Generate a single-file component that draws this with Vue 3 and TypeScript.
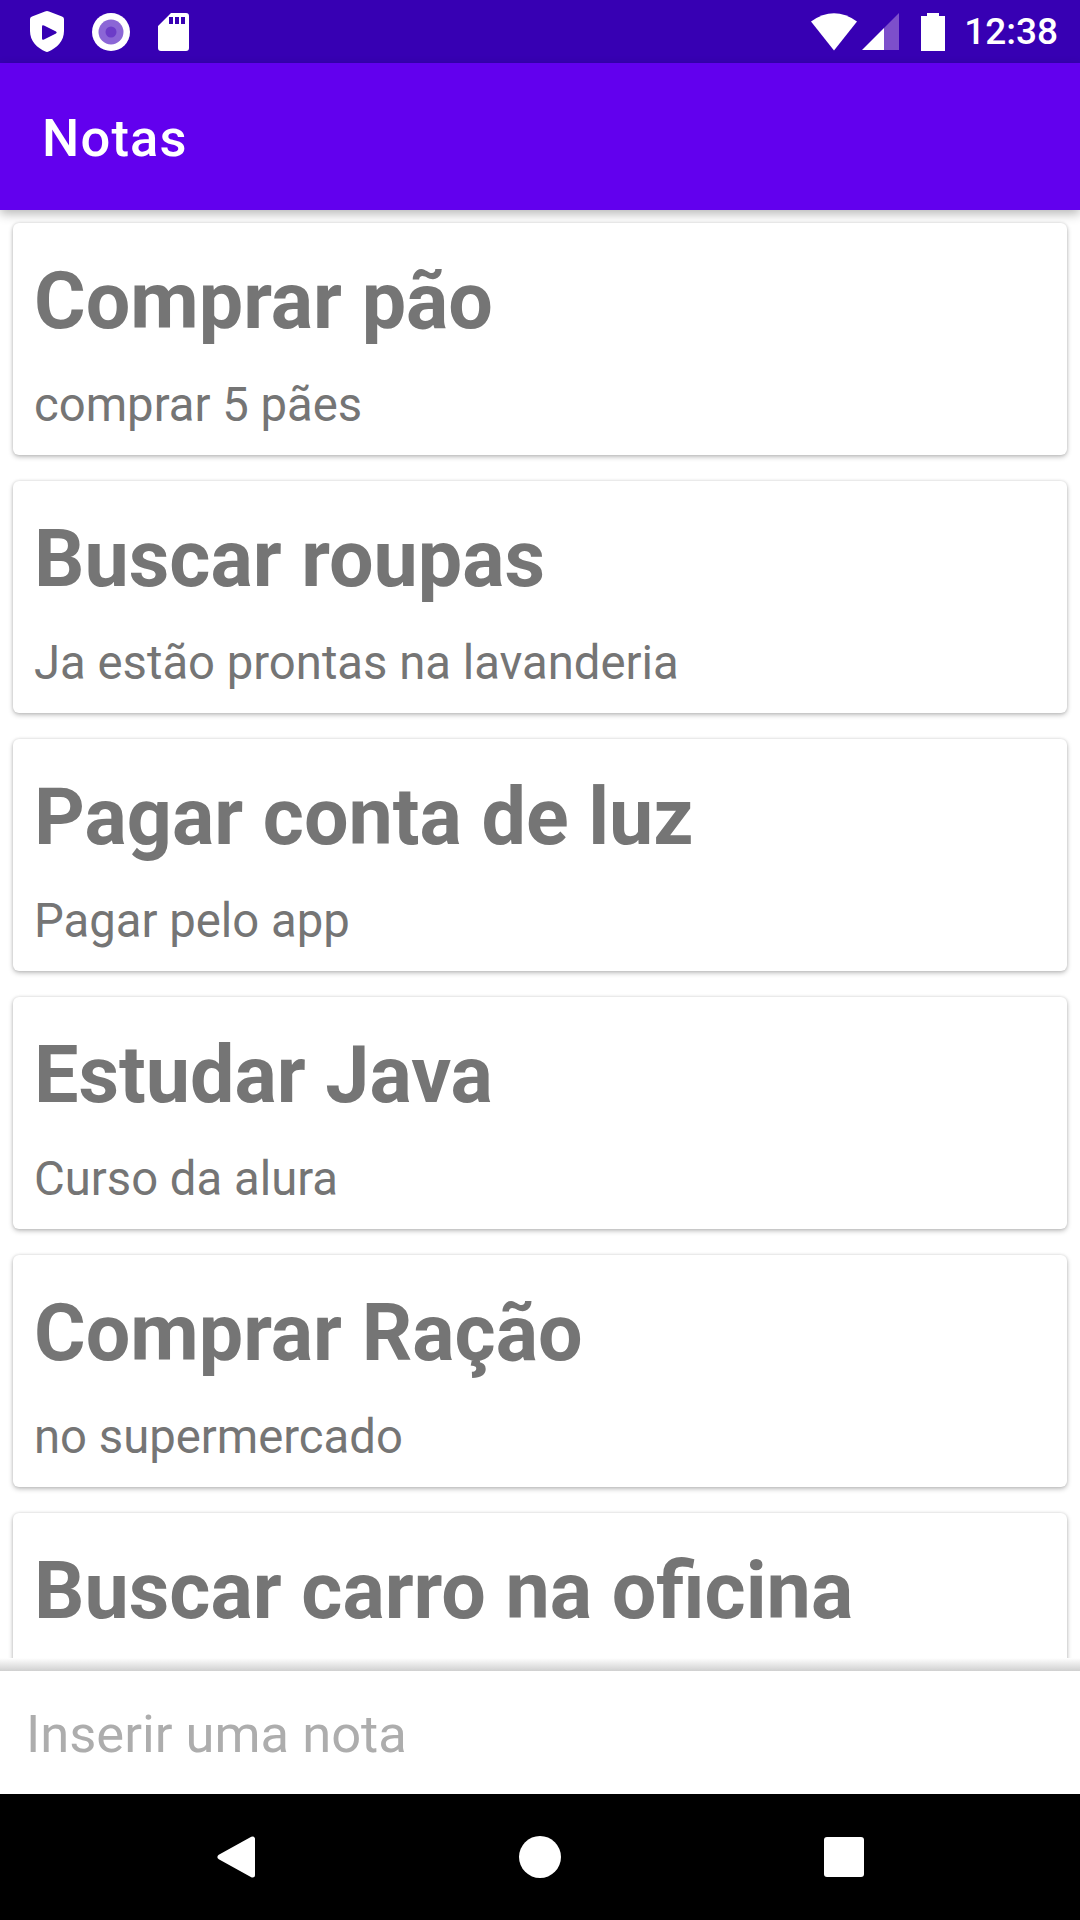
<script setup lang="ts">
const notes = [
  { title: 'Comprar pão', body: 'comprar 5 pães' },
  { title: 'Buscar roupas', body: 'Ja estão prontas na lavanderia' },
  { title: 'Pagar conta de luz', body: 'Pagar pelo app' },
  { title: 'Estudar Java', body: 'Curso da alura' },
  { title: 'Comprar Ração', body: 'no supermercado' },
  { title: 'Buscar carro na oficina', body: '' }
]
</script>

<template>
  <div class="screen">
    <div class="status-bar">
      <div class="status-left">
        <svg width="34" height="41" viewBox="0 0 34 41">
          <path fill="#fff" d="M17 0 Q18 0 19 0.500 L32 5.500 Q34 6.200 34 8 V20 C34 30 27 37 18 40.800 Q17 41 16 40.800 C7 37 0 30 0 20 V8 Q0 6.200 2 5.500 L15 0.500 Q16 0 17 0 Z" />
          <path fill="#3700b3" d="M12 15.500 Q12 13.500 14 14.500 L26 20.500 Q27.500 21.500 26 22.500 L14 28.500 Q12 29.500 12 27.500 Z" />
        </svg>
        <svg width="38" height="38" viewBox="0 0 38 38">
          <circle cx="19" cy="19" r="19" fill="#fff" />
          <circle cx="19" cy="19" r="12.500" fill="#8b66d6" />
          <circle cx="19" cy="19" r="5.500" fill="#6c3cc8" />
        </svg>
        <svg width="31" height="38" viewBox="0 0 31 38">
          <path fill="#fff" fill-rule="evenodd" d="M13 0 H28 Q31 0 31 3 V35 Q31 38 28 38 H3 Q0 38 0 35 V13 Z M11 4 V11 H15 V4 Z M17 4 V11 H21 V4 Z M23 4 V11 H27 V4 Z" />
        </svg>
      </div>
      <div class="status-right">
        <svg class="wifi" width="46" height="38" viewBox="0 0 46 38">
          <path fill="#fff" d="M0 8.500 Q23 -8 46 8.500 L23 37.500 Z" />
        </svg>
        <svg class="signal" width="37" height="37" viewBox="0 0 37 37">
          <path fill="#7d4fcb" d="M37 0 V37 H22 V15 Z" />
          <path fill="#fff" d="M22 15 V37 H0 Z" />
        </svg>
        <svg class="battery" width="24" height="38" viewBox="0 0 24 38">
          <path fill="#fff" d="M6 0 H18 V3 H24 V38 H0 V3 H6 Z" />
        </svg>
        <span class="clock">12:38</span>
      </div>
    </div>

    <header class="app-bar">Notas</header>

    <main class="note-list">
      <article v-for="note in notes" :key="note.title" class="note-card">
        <h2 class="note-title">{{ note.title }}</h2>
        <p v-if="note.body" class="note-body">{{ note.body }}</p>
      </article>
    </main>

    <div class="composer-shadow"></div>
    <footer class="composer">
      <span class="placeholder">Inserir uma nota</span>
    </footer>

    <nav class="nav-bar">
      <svg width="38" height="42" viewBox="0 0 38 42">
        <path fill="#fff" stroke="#fff" stroke-width="5" stroke-linejoin="round" d="M3 21 L35.500 3 V39 Z" />
      </svg>
      <span class="nav-home"></span>
      <span class="nav-recent"></span>
    </nav>
  </div>
</template>

<style>
html,
body {
  margin: 0;
  background: #fff;
}
</style>

<style scoped>
.screen {
  width: 1080px;
  height: 1920px;
  display: flex;
  flex-direction: column;
  overflow: hidden;
  background: #fff;
  font-family: Roboto, "Liberation Sans", sans-serif;
}
.status-bar {
  height: 63px;
  flex: none;
  display: flex;
  align-items: center;
  justify-content: space-between;
  background: #3700b3;
}
.status-left {
  display: flex;
  align-items: center;
  gap: 28px;
  padding-left: 30px;
}
.status-right {
  display: flex;
  align-items: center;
  padding-right: 22px;
  color: #fff;
}
.signal {
  margin-left: 5px;
}
.battery {
  margin-left: 22px;
}
.clock {
  margin-left: 19px;
  font-size: 37px;
  font-weight: 500;
  line-height: 44px;
}
.app-bar {
  height: 147px;
  flex: none;
  position: relative;
  z-index: 2;
  display: flex;
  align-items: center;
  padding: 2px 0 0 42px;
  box-sizing: border-box;
  background: #6200ee;
  color: #fff;
  font-size: 52.5px;
  font-weight: 500;
  letter-spacing: 1.2px;
  box-shadow: 0 4px 10px rgba(0, 0, 0, 0.28);
}
.note-list {
  flex: 1;
  min-height: 0;
  position: relative;
  z-index: 3;
  overflow: hidden;
  padding: 13px 13px 0;
}
.note-card {
  box-sizing: border-box;
  height: 232px;
  margin-bottom: 26px;
  padding: 32px 21px 0;
  background: #fff;
  border-radius: 6px;
  box-shadow: 0 2px 5px rgba(0, 0, 0, 0.25), 0 0 3px rgba(0, 0, 0, 0.12);
}
.note-title {
  margin: 0;
  color: #757575;
  font-size: 79px;
  font-weight: 700;
  line-height: 92px;
}
.note-body {
  margin: 31px 0 0;
  color: #757575;
  font-size: 47.25px;
  line-height: 55px;
}
.composer-shadow {
  height: 13px;
  flex: none;
  background: linear-gradient(to bottom, #fff, #d0d0d0);
}
.composer {
  height: 123px;
  flex: none;
  box-sizing: border-box;
  display: flex;
  align-items: center;
  padding: 2px 0 0 26px;
  background: #fff;
}
.placeholder {
  color: #adadad;
  font-size: 52.5px;
}
.nav-bar {
  height: 126px;
  flex: none;
  display: flex;
  align-items: center;
  background: #000;
  padding-left: 217px;
}
.nav-home {
  width: 42px;
  height: 42px;
  margin-left: 264px;
  border-radius: 50%;
  background: #fff;
}
.nav-recent {
  width: 40px;
  height: 40px;
  margin-left: 263px;
  border-radius: 3px;
  background: #fff;
}
</style>
